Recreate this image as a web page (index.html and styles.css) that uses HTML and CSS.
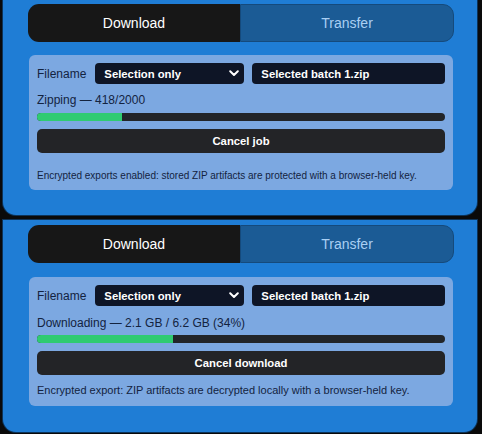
FILE: index.html
```html
<!DOCTYPE html>
<html>
<head>
<meta charset="utf-8">
<link rel="stylesheet" href="styles.css">
</head>
<body>
<div class="stack">
  <section class="panel panel-top">
    <div class="tabs">
      <div class="tab tab-active">Download</div>
      <div class="tab tab-idle">Transfer</div>
    </div>
    <div class="card card-top">
      <div class="row">
        <span class="label">Filename</span>
        <div class="select">
          <span>Selection only</span>
          <svg class="chev" width="10" height="7" viewBox="0 0 10 7"><path d="M1.2 1.3 L5 5 L8.8 1.3" fill="none" stroke="#fff" stroke-width="2" stroke-linecap="round" stroke-linejoin="round"/></svg>
        </div>
        <div class="input">Selected batch 1.zip</div>
      </div>
      <div class="status status-top">Zipping — 418/2000</div>
      <div class="bar bar-top"><div class="fill" style="width:20.9%"></div></div>
      <button class="btn">Cancel job</button>
      <p class="note note-top">Encrypted exports enabled: stored ZIP artifacts are protected with a browser-held key.</p>
    </div>
  </section>
  <section class="panel panel-bottom">
    <div class="tabs">
      <div class="tab tab-active">Download</div>
      <div class="tab tab-idle">Transfer</div>
    </div>
    <div class="card card-bottom">
      <div class="row">
        <span class="label">Filename</span>
        <div class="select">
          <span>Selection only</span>
          <svg class="chev" width="10" height="7" viewBox="0 0 10 7"><path d="M1.2 1.3 L5 5 L8.8 1.3" fill="none" stroke="#fff" stroke-width="2" stroke-linecap="round" stroke-linejoin="round"/></svg>
        </div>
        <div class="input">Selected batch 1.zip</div>
      </div>
      <div class="status status-bottom">Downloading — 2.1 GB / 6.2 GB (34%)</div>
      <div class="bar bar-bottom"><div class="fill" style="width:33.3%"></div></div>
      <button class="btn">Cancel download</button>
      <p class="note note-bottom">Encrypted export: ZIP artifacts are decrypted locally with a browser-held key.</p>
    </div>
  </section>
</div>
</body>
</html>
```
FILE: styles.css
```css
* { box-sizing: border-box; }
html, body { margin: 0; padding: 0; }
body {
  background: #0a0a0a;
  font-family: "Liberation Sans", Arial, sans-serif;
  width: 482px;
  height: 434px;
  overflow: hidden;
}
.stack {
  display: flex;
  flex-direction: column;
  gap: 5px;
  padding-left: 3px;
}
.panel {
  width: 474px;
  background: #1f7dd5;
  border-radius: 0 0 13px 13px;
  padding: 0 24px 0 26px;
  box-shadow: 0 0 0 1px #0d3358;
}
.panel-top { padding-top: 4px; padding-bottom: 25px; }
.panel-bottom { padding-top: 5px; padding-bottom: 26px; }
.tabs {
  display: flex;
  margin: 0 -1px;
  height: 38px;
}
.tab {
  flex: 1;
  display: flex;
  align-items: center;
  justify-content: center;
  font-size: 14px;
}
.tab-active {
  background: #171717;
  color: #ffffff;
  border-radius: 11px 0 0 11px;
}
.tab-idle {
  background: #1b5b95;
  color: #a9cff3;
  border: 1px solid #154a7c;
  border-radius: 0 11px 11px 0;
}
.card {
  background: #7ca8e1;
  border-radius: 6px;
  padding: 8px 8px 0 8px;
}
.panel-top .card { margin-top: 13px; padding-bottom: 7px; }
.panel-bottom .card { margin-top: 14px; padding-bottom: 9px; }
.row {
  display: flex;
  align-items: center;
  height: 21px;
}
.label {
  font-size: 12px;
  color: #13233f;
  margin-right: 9px;
}
.select, .input {
  height: 21px;
  background: #0e1526;
  color: #ffffff;
  border-radius: 4px;
  font-size: 11.3px;
  font-weight: bold;
  display: flex;
  align-items: center;
  padding: 0 9px;
}
.select {
  flex: 0 0 149px;
  justify-content: space-between;
  padding-right: 5px;
}
.chev { display: block; }
.input {
  flex: 1;
  margin-left: 8px;
}
.status {
  font-size: 12px;
  line-height: 16px;
  color: #13233f;
}
.status-top { margin-top: 8px; }
.status-bottom { margin-top: 9px; }
.bar {
  height: 8px;
  background: #222529;
  border-radius: 4px;
  overflow: hidden;
}
.bar-top { margin-top: 5px; }
.bar-bottom { margin-top: 4px; }
.fill {
  height: 100%;
  background: #2fcb72;
}
.btn {
  display: block;
  width: 100%;
  height: 24px;
  margin-top: 8px;
  background: #232427;
  color: #ffffff;
  border: none;
  border-radius: 5px;
  font-family: inherit;
  font-size: 11.3px;
  font-weight: bold;
  padding: 0;
}
.note {
  margin: 0;
  color: #13233f;
  line-height: 14px;
}
.note-top { margin-top: 16px; font-size: 10px; }
.note-bottom { margin-top: 8px; font-size: 11px; }
```
